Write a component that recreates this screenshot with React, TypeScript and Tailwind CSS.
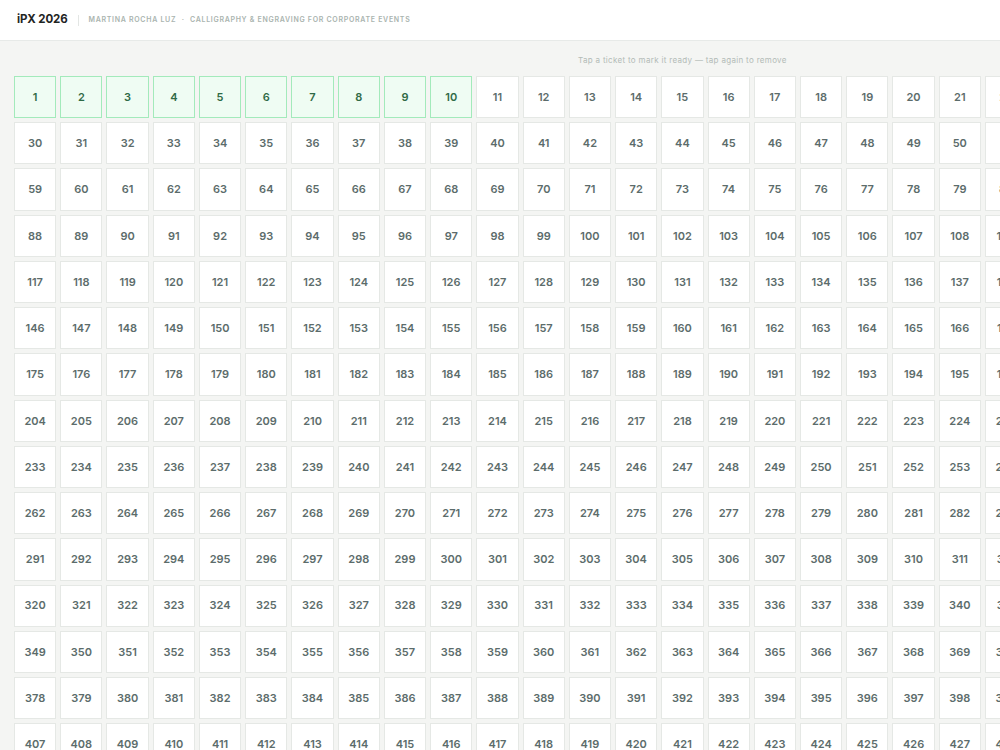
import React, { useState } from "react";

const TOTAL = 29 * 18;

function Header() {
  return (
    <header className="h-[41px] bg-white border-b border-[#e7eae8] flex items-center px-[17px]">
      <h1 className="font-bold text-[11.5px] text-[#1f2523] tracking-[-0.01em]">iPX 2026</h1>
      <span className="mx-[10px] h-[11px] w-px bg-[#e3e6e4]" />
      <p className="pt-px text-[7px] font-semibold uppercase tracking-[0.1em] text-[#aab4af]">
        Martina Rocha Luz <span className="mx-[3px]">·</span> Calligraphy &amp; Engraving for Corporate Events
      </p>
    </header>
  );
}

export default function App() {
  const [ready, setReady] = useState<Set<number>>(
    () => new Set([1, 2, 3, 4, 5, 6, 7, 8, 9, 10])
  );

  const toggle = (n: number) => {
    setReady((prev) => {
      const next = new Set(prev);
      if (next.has(n)) next.delete(n);
      else next.add(n);
      return next;
    });
  };

  return (
    <div
      className="min-w-max min-h-screen bg-[#f4f5f3]"
      style={{ fontFamily: "Inter, 'Noto Sans', sans-serif" }}
    >
      <Header />
      <main className="px-[14px] pt-[11px] pb-6">
        <p className="text-center text-[8px] leading-4 tracking-[0.04em] text-[#b3bbb7] mb-2">
          Tap a ticket to mark it ready — tap again to remove
        </p>
        <div className="grid grid-cols-[repeat(29,42.24px)] auto-rows-[42.24px] gap-1">
          {Array.from({ length: TOTAL }, (_, i) => i + 1).map((n) => {
            const on = ready.has(n);
            return (
              <button
                key={n}
                onClick={() => toggle(n)}
                className={
                  on
                    ? "flex items-center justify-center border border-[#a3eabb] bg-[#effcf3] text-[11px] font-semibold text-[#2f6a46]"
                    : "flex items-center justify-center border border-[#e5e8e5] bg-white text-[11px] font-semibold text-[#5c6c6b]"
                }
              >
                {n}
              </button>
            );
          })}
        </div>
      </main>
    </div>
  );
}
